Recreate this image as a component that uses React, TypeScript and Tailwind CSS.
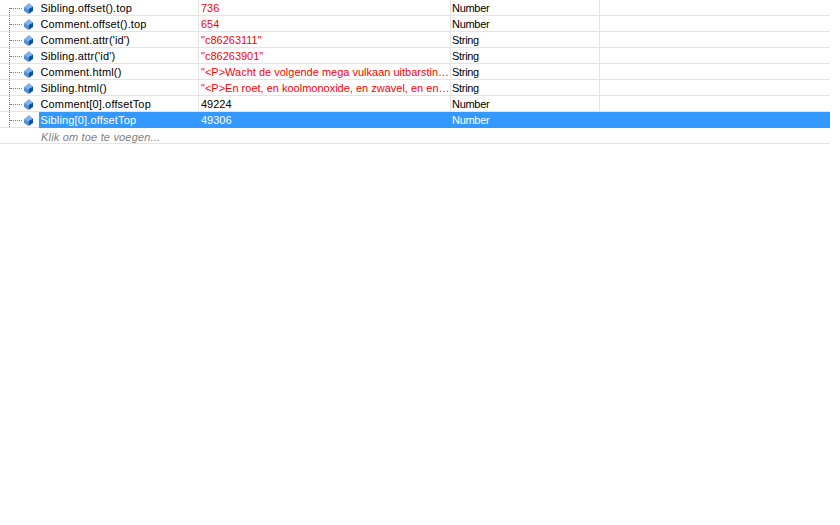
const rows = [
  { name: "Sibling.offset().top", value: "736", type: "Number", changed: true },
  { name: "Comment.offset().top", value: "654", type: "Number", changed: true },
  { name: "Comment.attr('id')", value: '"c86263111"', type: "String", changed: true },
  { name: "Sibling.attr('id')", value: '"c86263901"', type: "String", changed: true },
  { name: "Comment.html()", value: '"<P>Wacht de volgende mega vulkaan uitbarstin…', type: "String", changed: true },
  { name: "Sibling.html()", value: '"<P>En roet, en koolmonoxide, en zwavel, en en…', type: "String", changed: true },
  { name: "Comment[0].offsetTop", value: "49224", type: "Number", changed: false },
  { name: "Sibling[0].offsetTop", value: "49306", type: "Number", changed: false },
];

function Cube() {
  return (
    <svg width="9" height="11" viewBox="0 0 9 11" className="mt-[1px] shrink-0">
      <path d="M5 0 L9 3.5 L4.5 6 L0 4 Z" fill="#7fb2ea" />
      <path d="M0 4 L4.5 6 L4.5 11 L0 8 Z" fill="#4f8fdc" />
      <path d="M9 3.5 L4.5 6 L4.5 11 L9 8 Z" fill="#0f4fa8" />
    </svg>
  );
}

function Row({ row, first, selected }: { row: (typeof rows)[number]; first: boolean; selected: boolean }) {
  const line = selected ? "" : "border-r border-[#e4e4e4]";
  const valueColor = selected ? "text-white" : row.changed ? "text-[#ff0000]" : "text-black";

  return (
    <div className="flex h-4 items-start border-b border-[#e4e4e4]">
      <div className="relative flex h-[15px] w-[39px] shrink-0 items-center pl-6">
        <span className={`absolute bottom-0 left-[9px] border-l border-dotted border-[#808080] ${first ? "top-[8px]" : "top-0"}`} />
        <span className="absolute left-[10px] top-[8px] w-[12px] border-t border-dotted border-[#808080]" />
        <Cube />
      </div>
      <div className={`flex h-4 flex-1 ${selected ? "bg-[#3399ff] text-white" : "text-black"}`}>
        <div className={`flex h-[15px] w-[160px] shrink-0 items-center pl-[1.5px] pt-[2px] tracking-[0.15px] ${line}`}>
          {row.name}
        </div>
        <div className={`flex h-[15px] w-[252px] shrink-0 items-center whitespace-nowrap pl-[2px] pt-[2px] ${line} ${valueColor}`}>
          {row.value}
        </div>
        <div className={`flex h-[15px] w-[149px] shrink-0 items-center pl-[1px] pt-[2px] tracking-[-0.3px] ${line}`}>
          {row.type}
        </div>
      </div>
    </div>
  );
}

export default function App() {
  return (
    <div className="h-[525px] w-[840px] bg-white font-['Liberation_Sans',Arial,sans-serif] text-[11px] leading-none">
      <div className="w-[830px]">
        {rows.map((row, i) => (
          <Row key={row.name} row={row} first={i === 0} selected={i === rows.length - 1} />
        ))}
        <div className="flex h-4 items-center border-b border-[#e4e4e4] pl-[41px] pt-[4px] italic tracking-[0.18px] text-[#808080]">
          Klik om toe te voegen...
        </div>
      </div>
    </div>
  );
}
